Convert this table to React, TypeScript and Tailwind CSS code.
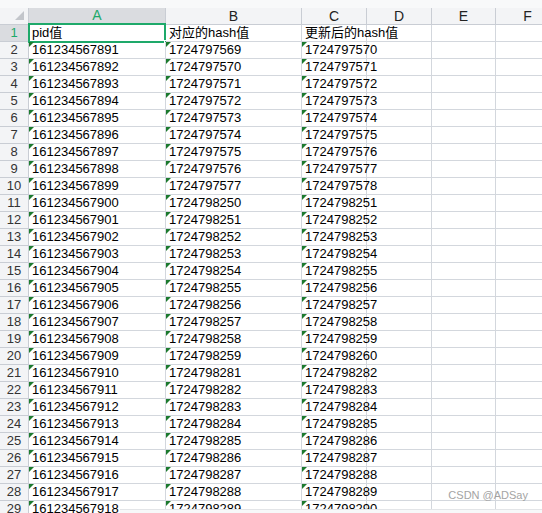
import type { ReactNode } from "react";

const font = { fontFamily: '"Liberation Sans", "Noto Sans CJK SC", sans-serif' };

const cols = [
  { key: "A", w: "w-[137px]" },
  { key: "B", w: "w-[136px]" },
  { key: "C", w: "w-[65px]" },
  { key: "D", w: "w-[65px]" },
  { key: "E", w: "w-[64px]" },
  { key: "F", w: "w-[64px]" },
];

function bValue(r: number) {
  if (r <= 10) return 1724797569 + (r - 2);
  if (r <= 20) return 1724798250 + (r - 11);
  return 1724798281 + (r - 21);
}

const rows = Array.from({ length: 28 }, (_, i) => {
  const r = i + 2;
  const b = bValue(r);
  return { r, a: String(161234567891 + i), b: String(b), c: String(b + 1) };
});

function Flag() {
  return (
    <svg className="absolute left-0 top-0" width="5" height="5" viewBox="0 0 5 5">
      <polygon points="0,0 5,0 0,5" fill="#1c7a2e" />
    </svg>
  );
}

function Cell({ w, children, flag }: { w: string; children?: ReactNode; flag?: boolean }) {
  return (
    <div className={`relative flex h-[17px] shrink-0 items-center overflow-visible whitespace-nowrap border-b border-r border-[#d3d7dd] pl-[3px] text-[13px] text-black ${w}`}>
      {flag && <Flag />}
      {children}
    </div>
  );
}

function RowHead({ n, active }: { n: number; active?: boolean }) {
  return (
    <div
      className={`flex h-[17px] w-[29px] shrink-0 items-center justify-center border-b border-r border-[#c9cdd4] text-[13px] ${
        active ? "bg-[#dadce0] text-[#1ea96a]" : "bg-[#f3f4f6] text-[#333]"
      }`}
    >
      {n}
    </div>
  );
}

export default function App() {
  return (
    <div className="relative h-[513px] w-[542px] overflow-hidden bg-white" style={font}>
      <div className="h-[8px] bg-[#f8f9fa]" />

      {/* column header */}
      <div className="flex h-[17px] bg-[#f3f4f6]">
        <div className="relative w-[29px] shrink-0 border-b border-r border-[#c9cdd4]">
          <svg className="absolute right-[4px] bottom-[4px]" width="9" height="9" viewBox="0 0 9 9">
            <polygon points="9,0 9,9 0,9" fill="#c3c6cb" />
          </svg>
        </div>
        {cols.map((c) => (
          <div
            key={c.key}
            className={`flex shrink-0 items-center justify-center border-r text-[14px] ${c.w} ${
              c.key === "A"
                ? "border-b-2 border-b-[#1ea96a] border-r-[#c9cdd4] bg-[#dadce0] text-[#1ea96a]"
                : "border-b border-[#c9cdd4] text-[#222]"
            }`}
          >
            {c.key}
          </div>
        ))}
      </div>

      {/* row 1 */}
      <div className="flex">
        <RowHead n={1} active />
        <div className="relative">
          <Cell w={cols[0].w}>pid值</Cell>
          <div className="pointer-events-none absolute -left-px -top-[2px] h-[20px] w-[138px] border-2 border-[#1ea96a]" />
          <div className="absolute -bottom-[3px] right-[-3px] h-[5px] w-[5px] border border-white bg-[#1ea96a]" />
        </div>
        <Cell w={cols[1].w}>对应的hash值</Cell>
        <Cell w={cols[2].w}>更新后的hash值</Cell>
        <Cell w={cols[3].w} />
        <Cell w={cols[4].w} />
        <Cell w={cols[5].w} />
      </div>

      {rows.map((row) => (
        <div key={row.r} className="flex">
          <RowHead n={row.r} />
          <Cell w={cols[0].w} flag>
            {row.a}
          </Cell>
          <Cell w={cols[1].w} flag>
            {row.b}
          </Cell>
          <Cell w={cols[2].w} flag>
            {row.c}
          </Cell>
          <Cell w={cols[3].w} />
          <Cell w={cols[4].w} />
          <Cell w={cols[5].w} />
        </div>
      ))}

      {/* bottom scroll strip */}
      <div className="absolute bottom-0 left-[120px] right-0 h-[4px] border-t border-[#e3e5e8] bg-[#f7f8f9]" />

      <div className="absolute bottom-[10px] right-[14px] text-[11px] text-[#9a9a9a] opacity-90">CSDN @ADSay</div>
    </div>
  );
}
